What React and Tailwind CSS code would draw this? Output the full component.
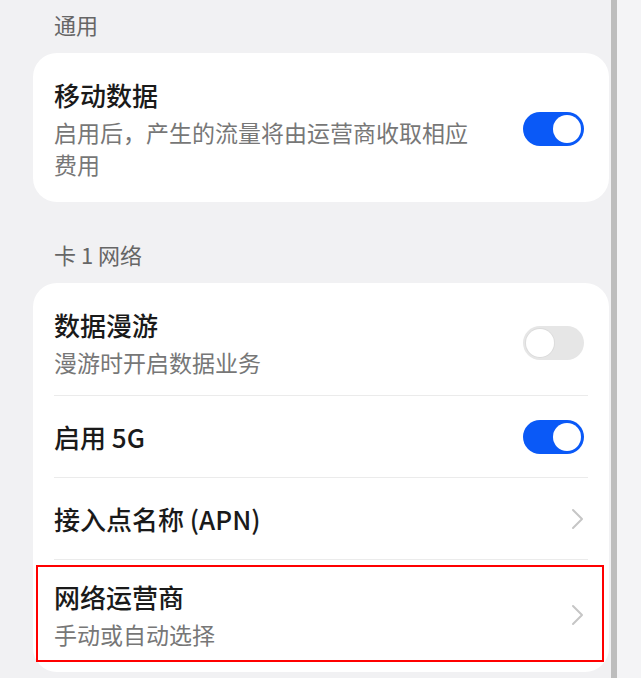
import React from 'react'

const font = { fontFamily: '"Noto Sans CJK SC", "Noto Sans", sans-serif' }

function Toggle({ on }) {
  return (
    <div
      className={
        'flex h-[34px] w-[61px] shrink-0 items-center rounded-full px-[3px] ' +
        (on ? 'justify-end bg-[#0a59f7]' : 'justify-start bg-[#e6e6e6]')
      }
    >
      <div
        className={
          'h-[28px] w-[28px] rounded-full bg-white ' +
          (on ? '' : 'shadow-[0_0_0_1px_#dcdcdc]')
        }
      />
    </div>
  )
}

function Chevron() {
  return (
    <svg width="14" height="22" viewBox="0 0 14 22" className="shrink-0">
      <path d="M3 2 L12 11 L3 20" fill="none" stroke="#c6c6c6" strokeWidth="2" strokeLinecap="round" strokeLinejoin="round" />
    </svg>
  )
}

function SectionLabel({ children, top }) {
  return (
    <div className={'pl-[21px] pb-[17px] text-[22px] leading-[24px] text-[#666666] ' + top}>
      {children}
    </div>
  )
}

function TwoLineRow({ title, sub, right, divider }) {
  return (
    <div className={'relative px-[21px] ' + (divider ? 'pt-[1px]' : '')}>
      {divider && <div className="absolute left-[21px] right-[21px] top-0 h-px bg-[#ebebeb]" />}
      <div className="flex items-center gap-[40px] pt-[20px] pb-[17px] pr-[4px]">
        <div className="min-w-0 flex-1">
          <div className="text-[26px] font-medium leading-[34px] text-[#1a1a1a]">{title}</div>
          <div className="mt-[4px] text-[23px] leading-[32px] text-[#777777]">{sub}</div>
        </div>
        {right}
      </div>
    </div>
  )
}

function OneLineRow({ title, right }) {
  return (
    <div className="relative px-[21px] pt-[1px]">
      <div className="absolute left-[21px] right-[21px] top-0 h-px bg-[#ebebeb]" />
      <div className="flex h-[81px] items-center justify-between pr-[4px]">
        <div className="text-[26px] font-medium leading-[34px] text-[#1a1a1a]">{title}</div>
        {right}
      </div>
    </div>
  )
}

export default function App() {
  return (
    <div className="flex h-[678px] w-[641px] overflow-hidden bg-[#f4f4f6]" style={font}>
      <div className="w-[611px] shrink-0 bg-[#f1f1f3] pl-[33px] pr-[2px]">
        <SectionLabel top="pt-[12px]">通用</SectionLabel>

        <div className="rounded-[24px] bg-white py-[5px]">
          <TwoLineRow
            title="移动数据"
            sub="启用后，产生的流量将由运营商收取相应费用"
            right={<Toggle on />}
          />
        </div>

        <SectionLabel top="pt-[40px]">卡 1 网络</SectionLabel>

        <div className="rounded-[24px] bg-white py-[5px]">
          <TwoLineRow title="数据漫游" sub="漫游时开启数据业务" right={<Toggle on={false} />} />
          <OneLineRow title="启用 5G" right={<Toggle on />} />
          <OneLineRow title="接入点名称 (APN)" right={<Chevron />} />
          <div className="relative">
            <TwoLineRow title="网络运营商" sub="手动或自动选择" right={<Chevron />} divider />
            {/* annotation box */}
            <div className="pointer-events-none absolute left-[3px] right-[5px] top-[6px] bottom-[5px] border-2 border-[#ff0000]" />
          </div>
        </div>
      </div>
      <div className="w-[6px] shrink-0 bg-[#bdbdbd]" />
      <div className="flex-1" />
    </div>
  )
}
